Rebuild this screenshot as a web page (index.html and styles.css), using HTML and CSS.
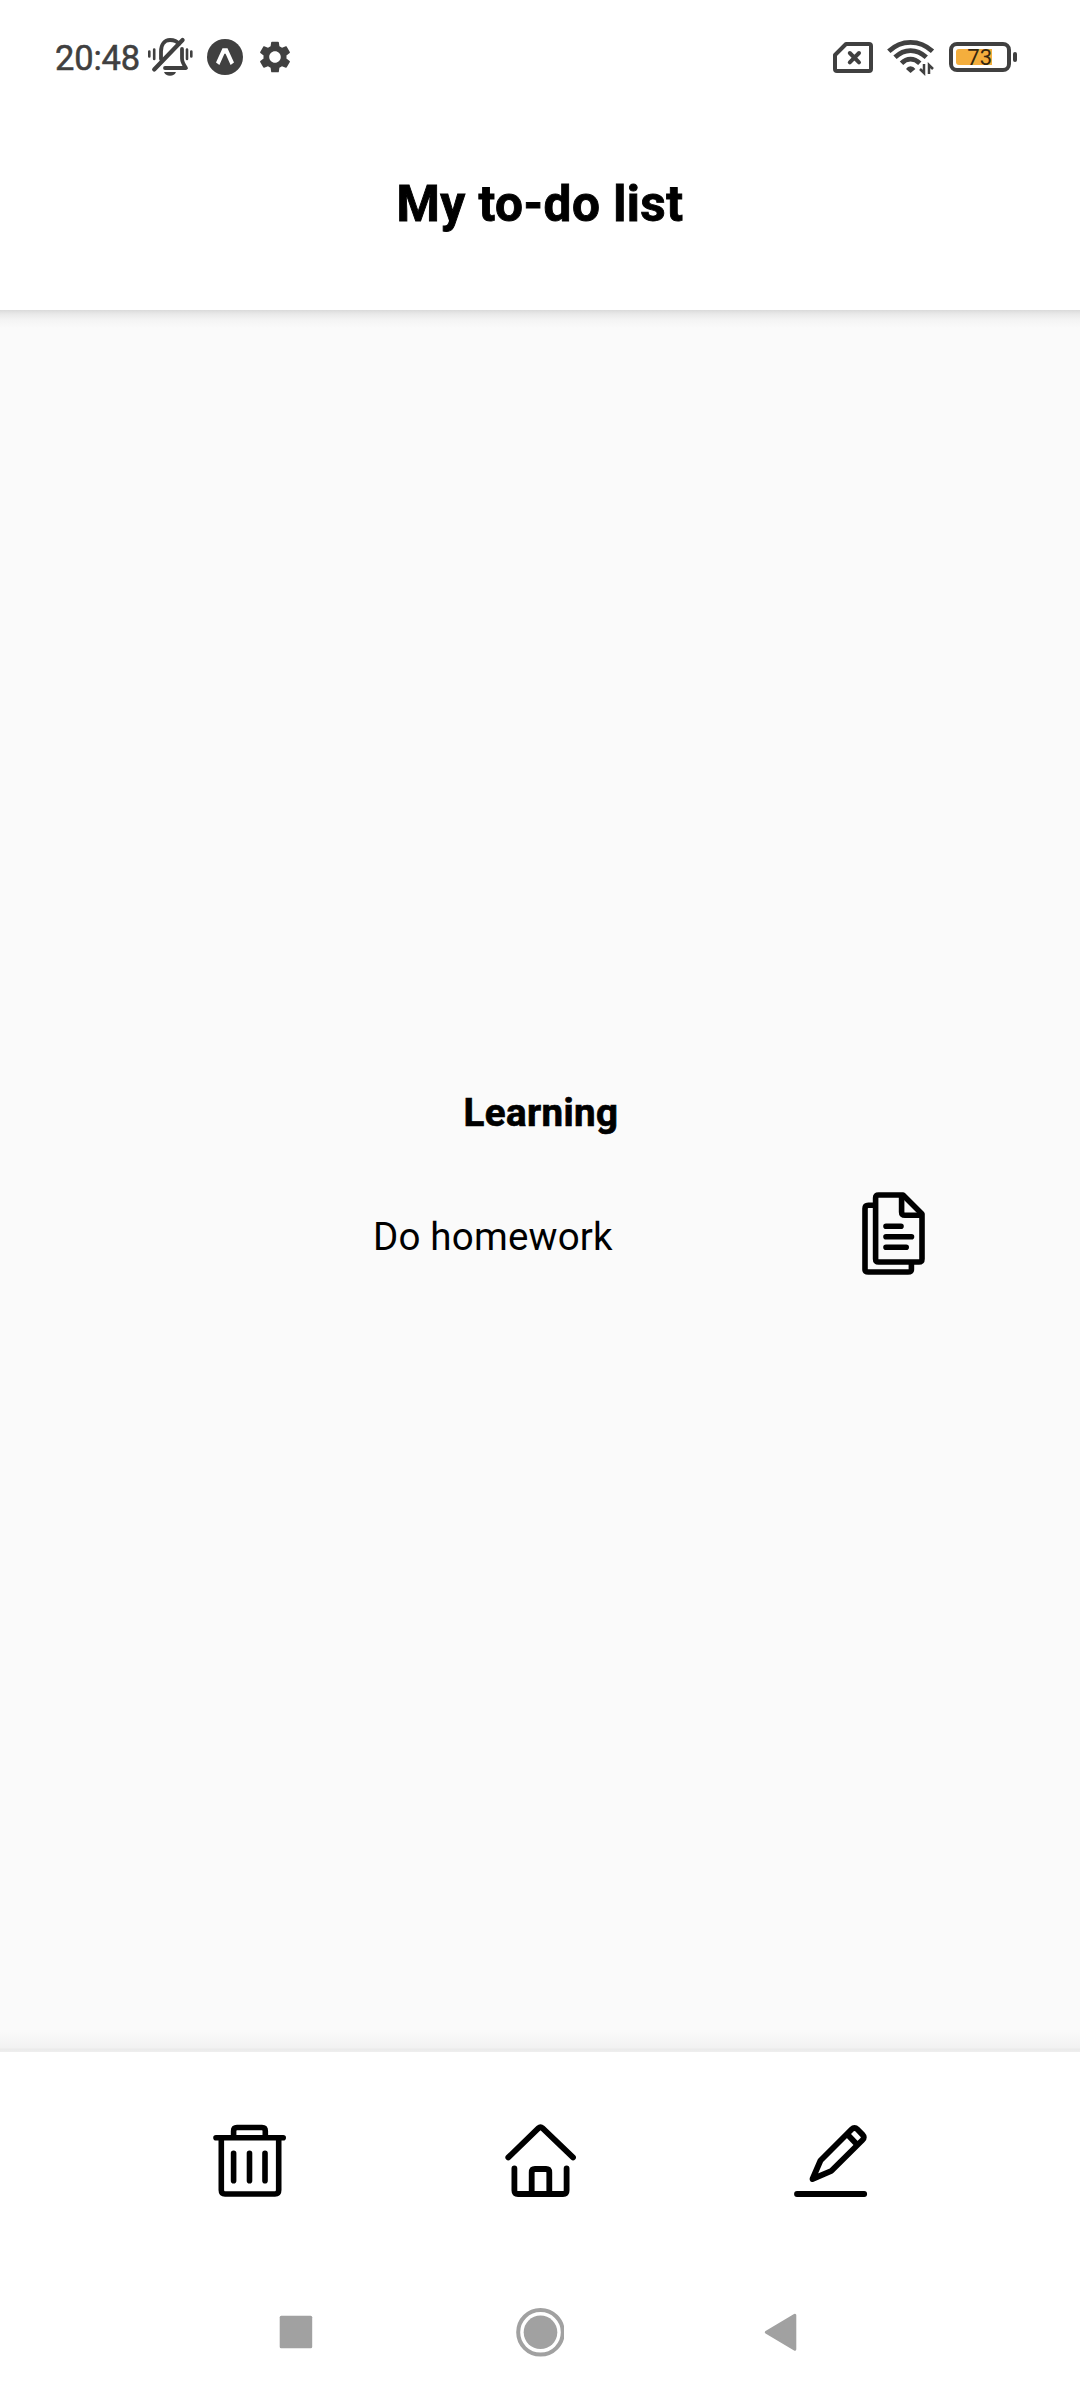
FILE: index.html
```html
<!DOCTYPE html>
<html lang="en">
<head>
<meta charset="utf-8">
<title>My to-do list</title>
<link rel="stylesheet" href="styles.css">
</head>
<body>
<div class="app">
  <header class="header">
    <div class="status">
      <div class="status-left">
        <span class="clock">20:48</span>
        <svg width="50" height="44" viewBox="145 36 50 44" fill="none" stroke="#404040" stroke-width="3.8" stroke-linecap="round">
          <path d="M161 60V52.500C161 45.500 164.500 41 170 41C174 41 177 42.200 179 45" />
          <path d="M154.200 70.500L182.600 41" stroke-width="4.200" />
          <path d="M182 50V59.500C182 63 183.500 65.500 186 69H165" stroke-linejoin="round" />
          <path d="M164 73H176C175 75.500 173 76.800 170 76.800S165 75.500 164 73Z" fill="#404040" stroke="none" />
          <path d="M149.300 52.500V57.500M154.200 50.500V60M187 50.500V60M191.300 52.500V57.500" stroke-width="2.600" />
        </svg>
        <svg width="36" height="36" viewBox="207 39 36 36">
          <circle cx="225" cy="57" r="18" fill="#404040" />
          <path d="M222.500 48.200H227.500L234 62.500L230.600 65L225.800 54.300Q225 52.800 224.200 54.300L219.400 65L216 62.500Z" fill="#fff" />
        </svg>
        <svg class="gear" width="32" height="32" viewBox="2 2 20 20" fill="#404040">
          <path d="M19.140 12.940c.04-.3.060-.61.060-.94 0-.32-.02-.64-.07-.94l2.030-1.580c.18-.14.230-.41.120-.61l-1.920-3.320c-.12-.22-.37-.29-.59-.22l-2.390.96c-.5-.38-1.030-.7-1.620-.94l-.36-2.540c-.04-.24-.24-.41-.48-.41h-3.840c-.24 0-.43.170-.47.410l-.36 2.540c-.59.240-1.130.570-1.620.940l-2.390-.96c-.22-.08-.47 0-.59.220L2.740 8.870c-.12.210-.08.470.120.610l2.030 1.580c-.05.300-.09.630-.09.940s.02.640.07.940l-2.030 1.580c-.18.140-.23.410-.12.610l1.920 3.320c.12.220.37.290.59.220l2.390-.96c.5.380 1.030.7 1.620.94l.36 2.540c.05.240.24.410.48.410h3.840c.24 0 .44-.17.470-.41l.36-2.540c.59-.24 1.130-.56 1.620-.94l2.390.96c.22.080.47 0 .59-.22l1.920-3.320c.12-.22.070-.47-.12-.61l-2.010-1.580zM12 15.600c-1.980 0-3.600-1.620-3.600-3.600s1.620-3.600 3.600-3.600 3.600 1.620 3.600 3.600-1.620 3.600-3.600 3.600z" />
        </svg>
      </div>
      <div class="status-right">
        <svg class="sim" width="42" height="34" viewBox="832 41 42 34" fill="none" stroke="#404040" stroke-width="4" stroke-linejoin="round" stroke-linecap="round">
          <path d="M846 45H869Q871 45 871 47V70Q871 72 869 72H837Q835 72 835 70V56Z" />
          <path d="M849.800 54L859 63.300M859 54L849.800 63.300" />
        </svg>
        <svg width="50" height="38" viewBox="886 39 50 38" fill="none" stroke="#404040" stroke-width="4.800">
          <path d="M888.800 52.300Q898 43.300 910.500 43.300T932.500 52.300M895 58.300Q902 51.600 910.500 51.600T926.300 58.300M901.500 64.300Q905.500 60.200 910.500 60.200T919.800 64.300" />
          <path d="M906 70Q907.500 67.300 910.500 67.300T915.400 70L910.500 74Z" fill="#404040" stroke="none" />
          <path d="M924 65V74L920 70M929 75V66L933 70" stroke-width="2.500" />
        </svg>
        <div class="battery"><div class="battery-case"><div class="battery-fill">73</div></div><div class="battery-tip"></div></div>
      </div>
    </div>
    <h1 class="title">My to-do list</h1>
  </header>

  <main class="content">
    <h2 class="category">Learning</h2>
    <div class="task">
      <span class="task-name">Do homework</span>
      <svg width="64" height="84" viewBox="862 1191 64 84" fill="none" stroke="#000" stroke-width="5.600" stroke-linecap="round" stroke-linejoin="round">
        <path d="M875.600 1198Q875.600 1195 878.600 1195H903L922 1214V1259Q922 1262 919 1262H878.600Q875.600 1262 875.600 1259Z" />
        <path d="M901.600 1196V1212Q901.600 1215.300 905 1215.300H921" />
        <path d="M874 1205.300H868.300Q865 1205.300 865 1208.500V1269.500Q865 1272 868.300 1272H908Q911.400 1272 911.400 1269.500V1263" />
        <path d="M886 1226.300H901M886 1236.700H911.500M886 1247.200H906.200" />
      </svg>
    </div>
  </main>

  <footer class="footer">
    <nav class="tabs">
      <svg width="80" height="80" viewBox="210 2120 80 80" fill="none" stroke="#000" stroke-width="5.600" stroke-linecap="round" stroke-linejoin="round">
        <path d="M216 2137.800H283.200M233.600 2137V2131Q233.600 2127.500 237 2127.500H262Q265.300 2127.500 265.300 2131V2137M221.300 2138V2190Q221.300 2194 225 2194H275Q278.700 2194 278.700 2190V2138M233.600 2153.300V2180.700M249.500 2153.300V2180.700M265 2153.300V2180.700" />
      </svg>
      <svg width="80" height="80" viewBox="500 2120 80 80" fill="none" stroke="#000" stroke-width="5.800" stroke-linecap="round" stroke-linejoin="round">
        <path d="M508.300 2157.400L538.500 2128.200Q540.500 2126.300 542.500 2128.200L573 2157.400M514.400 2168.500V2190.500Q514.400 2194 518 2194H563Q566.600 2194 566.600 2190.500V2168.500M531.700 2193V2172.500Q531.700 2169 535 2169H546Q549.300 2169 549.300 2172.500V2193" />
      </svg>
      <svg width="80" height="80" viewBox="790 2120 80 80" fill="none" stroke="#000" stroke-width="5.800" stroke-linecap="round" stroke-linejoin="round">
        <path d="M797 2194H864.200M812.500 2179L820.500 2160.500L851.700 2129.300Q854.500 2126.500 857.300 2129.300L862.500 2134.600Q865.200 2137.400 862.500 2140L831.500 2170.800ZM847.500 2134.500L857 2144.500" />
      </svg>
    </nav>
    <div class="system-nav">
      <svg width="50" height="50" viewBox="271 2307 50 50" fill="#a1a1a1"><rect x="279.700" y="2315.700" width="32.500" height="32.500" rx="1.500" /></svg>
      <svg width="50" height="50" viewBox="514 2307 50 50"><circle cx="540.500" cy="2332.300" r="22.300" fill="none" stroke="#a1a1a1" stroke-width="4" /><circle cx="540.500" cy="2332.300" r="16.800" fill="#a1a1a1" /></svg>
      <svg width="50" height="50" viewBox="756 2307 50 50" fill="#a1a1a1" stroke="#a1a1a1" stroke-width="3" stroke-linejoin="round"><path d="M766.300 2332.200L794.800 2315.300V2349.300Z" /></svg>
    </div>
  </footer>
</div>
</body>
</html>
```
FILE: styles.css
```css
body {
  margin: 0;
  font-family: Roboto, sans-serif;
  color: #000;
}

svg {
  display: block;
  flex: none;
}

.app {
  display: flex;
  flex-direction: column;
  width: 1080px;
  height: 2400px;
  background: #fafafa;
  overflow: hidden;
}

.header {
  height: 310px;
  background: #fff;
}

.status {
  display: flex;
  justify-content: space-between;
  align-items: center;
  height: 114px;
  padding: 0 63px 0 55px;
  color: #404040;
}

.status-left,
.status-right {
  display: flex;
  align-items: center;
}

.status-left {
  gap: 12px;
}

.status-right {
  gap: 13px;
}

.sim {
  margin-right: -1px;
}

.clock {
  width: 78px;
  font-size: 34.5px;
  line-height: 40px;
  padding-top: 2px;
  white-space: nowrap;
  letter-spacing: -0.2px;
  -webkit-text-stroke: 0.5px #404040;
}

.gear {
  margin-left: 4px;
}

.battery {
  display: flex;
  align-items: center;
  gap: 2px;
}

.battery-case {
  box-sizing: border-box;
  width: 62px;
  height: 30px;
  padding: 3px;
  border: 4px solid #404040;
  border-radius: 8px;
}

.battery-fill {
  width: 36px;
  height: 16px;
  border-radius: 3px 0 0 3px;
  background: #f4ae3d;
  color: #33260f;
  font-size: 22px;
  line-height: 18px;
  text-align: right;
}

.battery-tip {
  width: 4px;
  height: 10px;
  border-radius: 2px;
  background: #404040;
}

.title {
  margin: 60px 0 0;
  font-size: 49.5px;
  font-weight: 700;
  line-height: 60px;
  letter-spacing: 0.5px;
  text-align: center;
  -webkit-text-stroke: 0.9px #000;
}

/* The bars above and below cast a soft shadow onto the full width of the content. */
.content {
  display: flex;
  flex: 1;
  flex-direction: column;
  padding-top: 778px;
  background:
    linear-gradient(#dadada, #e9e9e9 4px, #f4f4f4 10px, #fafafa) top / 100% 18px no-repeat,
    linear-gradient(#fafafa, #f2f2f2 17px, #eaeaea 18px, #efefef) bottom / 100% 21px no-repeat,
    #fafafa;
}

.category {
  margin: 0;
  padding-left: 2px;
  font-size: 38.5px;
  font-weight: 700;
  line-height: 50px;
  letter-spacing: 0.4px;
  text-align: center;
  -webkit-text-stroke: 0.7px #000;
}

.task {
  display: flex;
  align-items: center;
  justify-content: space-between;
  height: 84px;
  margin-top: 53px;
  padding: 0 154px 0 373px;
}

.task-name {
  padding-top: 7px;
  font-size: 38.5px;
  line-height: 46px;
  letter-spacing: 0.2px;
}

.footer {
  height: 348px;
  background: #fff;
}

.tabs {
  display: flex;
  justify-content: space-between;
  padding: 68px 210px 0;
}

.system-nav {
  display: flex;
  justify-content: space-between;
  padding: 107px 274px 0 271px;
}
```
